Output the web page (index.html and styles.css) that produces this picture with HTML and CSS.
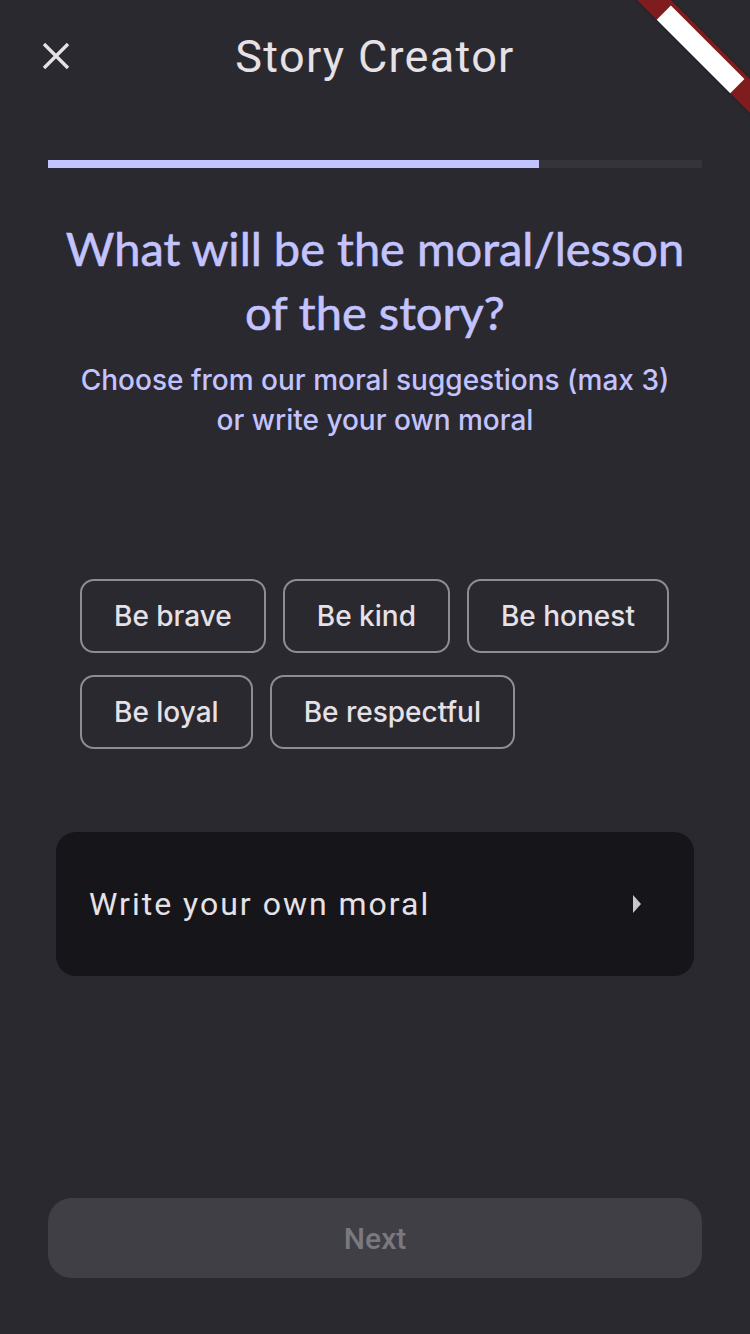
FILE: index.html
```html
<!DOCTYPE html>
<html>
<head>
<meta charset="utf-8">
<link rel="stylesheet" href="styles.css">
</head>
<body>
<div class="app">
  <header class="appbar">
    <div class="close">
      <svg width="28" height="28" viewBox="0 0 28 28"><path d="M2 2 L26 26 M26 2 L2 26" stroke="#e6e1e6" stroke-width="3.4" stroke-linecap="butt"/></svg>
    </div>
    <div class="title">Story Creator</div>
    <div class="spacer"></div>
  </header>
  <div class="progress"><div class="progress-fill"></div></div>
  <h1 class="heading">What will be the moral/lesson<br>of the story?</h1>
  <p class="subtitle">Choose from our moral suggestions (max 3)<br>or write your own moral</p>
  <div class="chips">
    <div class="chip">Be brave</div>
    <div class="chip">Be kind</div>
    <div class="chip">Be honest</div>
    <div class="chip">Be loyal</div>
    <div class="chip">Be respectful</div>
  </div>
  <div class="own">
    <span class="own-text">Write your own moral</span>
    <svg width="10" height="18" viewBox="0 0 10 18"><path d="M1 0 L9 9 L1 18 Z" fill="#c9c5cc"/></svg>
  </div>
  <div class="next">Next</div>
  <div class="banner"><div class="banner-text"></div></div>
</div>
</body>
</html>
```
FILE: styles.css
```css
html, body {
  margin: 0;
  padding: 0;
  background: #2a2930;
}
.app {
  position: relative;
  width: 750px;
  height: 1334px;
  overflow: hidden;
  background: #2a2930;
  display: flex;
  flex-direction: column;
  font-family: Roboto, "Liberation Sans", sans-serif;
}
.appbar {
  height: 112px;
  display: grid;
  grid-template-columns: 112px 1fr 112px;
  align-items: center;
}
.close {
  display: flex;
  justify-content: center;
  align-items: center;
}
.close svg { display: block; }
.title {
  text-align: center;
  color: #e6e1e6;
  font-size: 45px;
  letter-spacing: 1.3px;
  font-weight: 400;
}
.progress {
  margin: 48px 48px 0;
  height: 8px;
  background: #35343b;
}
.progress-fill {
  width: 75%;
  height: 100%;
  background: #c3c3ff;
}
.heading {
  margin: 48px 0 0;
  text-align: center;
  color: #c3c3ff;
  font-family: Lato, "Noto Sans", sans-serif;
  font-weight: 400;
  font-size: 47px;
  line-height: 64px;
  -webkit-text-stroke: 0.6px #c3c3ff;
}
.subtitle {
  margin: 16px 0 0;
  text-align: center;
  color: #c3c3ff;
  font-family: Inter, "Noto Sans", sans-serif;
  font-weight: 500;
  font-size: 28px;
  line-height: 40px;
}
.chips {
  margin: 139px 80px 0;
  display: flex;
  flex-wrap: wrap;
  column-gap: 17px;
  row-gap: 22px;
}
.chip {
  height: 74px;
  box-sizing: border-box;
  border: 2px solid #8e8c94;
  border-radius: 14px;
  padding: 0 32px;
  display: flex;
  align-items: center;
  color: #e6e1e6;
  font-family: Inter, "Noto Sans", sans-serif;
  font-weight: 500;
  font-size: 28px;
}
.own {
  margin: 83px 56px 0;
  height: 144px;
  background: #16151a;
  border-radius: 20px;
  display: flex;
  align-items: center;
  justify-content: space-between;
  padding: 0 52px 0 33px;
}
.own-text {
  color: #e6e1e6;
  font-size: 32px;
  letter-spacing: 2px;
}
.next {
  margin: auto 48px 56px;
  height: 80px;
  border-radius: 24px;
  background: #403f46;
  color: #7a797f;
  display: flex;
  align-items: center;
  justify-content: center;
  font-size: 30px;
  font-weight: 500;
}
.banner {
  position: absolute;
  left: 582px;
  top: 36px;
  width: 240px;
  height: 24px;
  background: #7e1c1e;
  transform: rotate(45deg);
  box-shadow: 0 0 3px rgba(0,0,0,0.4);
}
.banner-text {
  margin: 4px auto 0;
  width: 104px;
  height: 20px;
  background: #ffffff;
}
```
